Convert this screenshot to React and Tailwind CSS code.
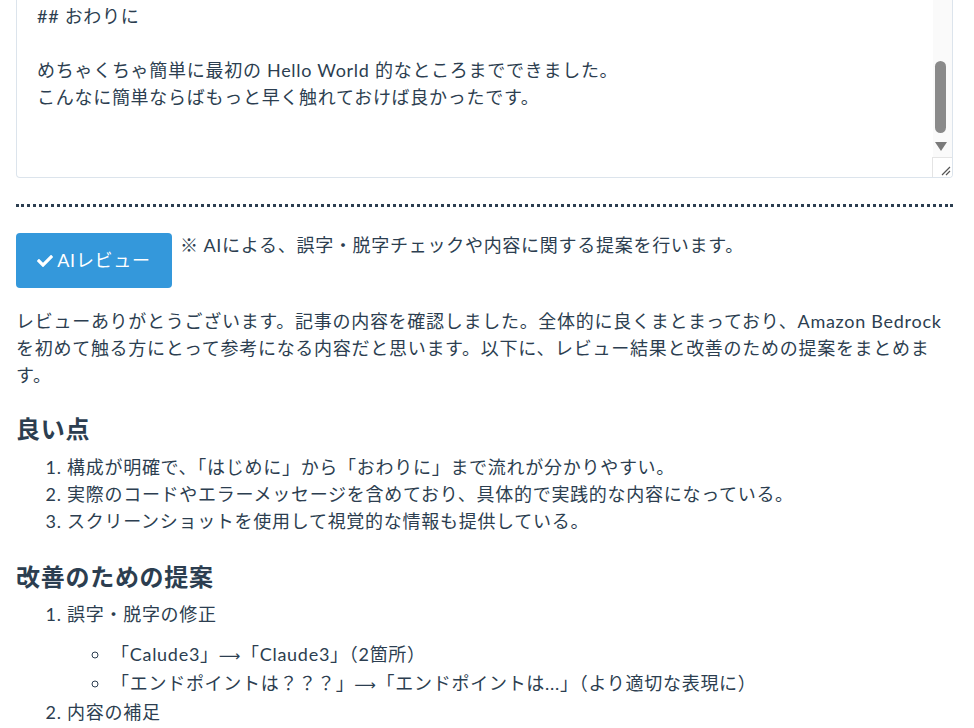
import React from "react";

const font = "font-['Lato','Noto_Sans_CJK_JP',sans-serif]";

const CheckIcon = () => (
  <svg viewBox="0 0 512 512" className="w-[16px] h-[16px]" fill="currentColor">
    <path d="M173.898 439.404l-166.4-166.4c-9.997-9.997-9.997-26.206 0-36.204l36.203-36.204c9.997-9.998 26.207-9.998 36.204 0L192 312.69 432.095 72.596c9.997-9.997 26.207-9.997 36.204 0l36.203 36.204c9.997 9.997 9.997 26.206 0 36.204l-294.4 294.401c-9.998 9.997-26.207 9.997-36.204-.001z" />
  </svg>
);

const Editor = () => (
  <div className="relative h-[178px] border-x border-b border-[#dce4ec] rounded-b-[4px] bg-white overflow-hidden">
    <div className="pl-[20px] pt-[3px] pr-[40px]">
      <p>## おわりに</p>
      <p>&nbsp;</p>
      <p>めちゃくちゃ簡単に最初の Hello World 的なところまでできました。</p>
      <p>こんなに簡単ならばもっと早く触れておけば良かったです。</p>
    </div>

    {/* scrollbar */}
    <div className="absolute right-0 top-0 bottom-0 w-[19px] bg-[#fafafa]">
      <div className="absolute left-[2px] top-[61px] w-[11px] h-[72px] rounded-full bg-[#8a8a8a]" />
      <div className="absolute left-[2px] top-[142px] w-0 h-0 border-l-[6px] border-r-[6px] border-t-[9px] border-l-transparent border-r-transparent border-t-[#7a7a7a]" />
      <div className="absolute right-0 bottom-0 w-[20px] h-[20px] bg-white border-l border-t border-[#e4e4e4]">
        <svg viewBox="0 0 20 20" className="w-[20px] h-[20px]">
          <path d="M9 17 L17 9 M13 17 L17 13" stroke="#555" strokeWidth="1.2" />
        </svg>
      </div>
    </div>
  </div>
);

export default function App() {
  return (
    <div className={`${font} text-[18px] leading-[27px] tracking-[0.04em] text-[#2c3e50] bg-white min-h-screen pl-4 pr-[21px]`}>
      <Editor />

      <div className="mt-[26px] border-t-[3px] border-dotted border-[#2c3e50]" />

      <div className="mt-[26px] flex items-start gap-[8px]">
        <button className="w-[156px] h-[55px] shrink-0 flex items-center justify-center gap-[4px] rounded-[4px] bg-[#3498db] text-white">
          <CheckIcon />
          <span>AIレビュー</span>
        </button>
        <p className="-mt-[1px]">※ AIによる、誤字・脱字チェックや内容に関する提案を行います。</p>
      </div>

      <p className="mt-[20px]">
        レビューありがとうございます。記事の内容を確認しました。全体的に良くまとまっており、Amazon Bedrock
        を初めて触る方にとって参考になる内容だと思います。以下に、レビュー結果と改善のための提案をまとめます。
      </p>

      <h3 className="mt-[25px] text-[24px] leading-[29px] font-bold">良い点</h3>
      <ol className="mt-[11px] list-decimal pl-[51px]">
        <li>構成が明確で、「はじめに」から「おわりに」まで流れが分かりやすい。</li>
        <li>実際のコードやエラーメッセージを含めており、具体的で実践的な内容になっている。</li>
        <li>スクリーンショットを使用して視覚的な情報も提供している。</li>
      </ol>

      <h3 className="mt-[27px] text-[24px] leading-[29px] font-bold">改善のための提案</h3>
      <ol className="mt-[10px] list-decimal pl-[51px]">
        <li>
          誤字・脱字の修正
          <ul className="mt-[13px] list-[circle] pl-[44px]">
            <li>「Calude3」<span className="font-['DejaVu_Sans'] text-[15px]">⟶</span>「Claude3」（2箇所）</li>
            <li>「エンドポイントは？？？」<span className="font-['DejaVu_Sans'] text-[15px]">⟶</span>「エンドポイントは...」（より適切な表現に）</li>
          </ul>
        </li>
        <li>内容の補足</li>
      </ol>
    </div>
  );
}
